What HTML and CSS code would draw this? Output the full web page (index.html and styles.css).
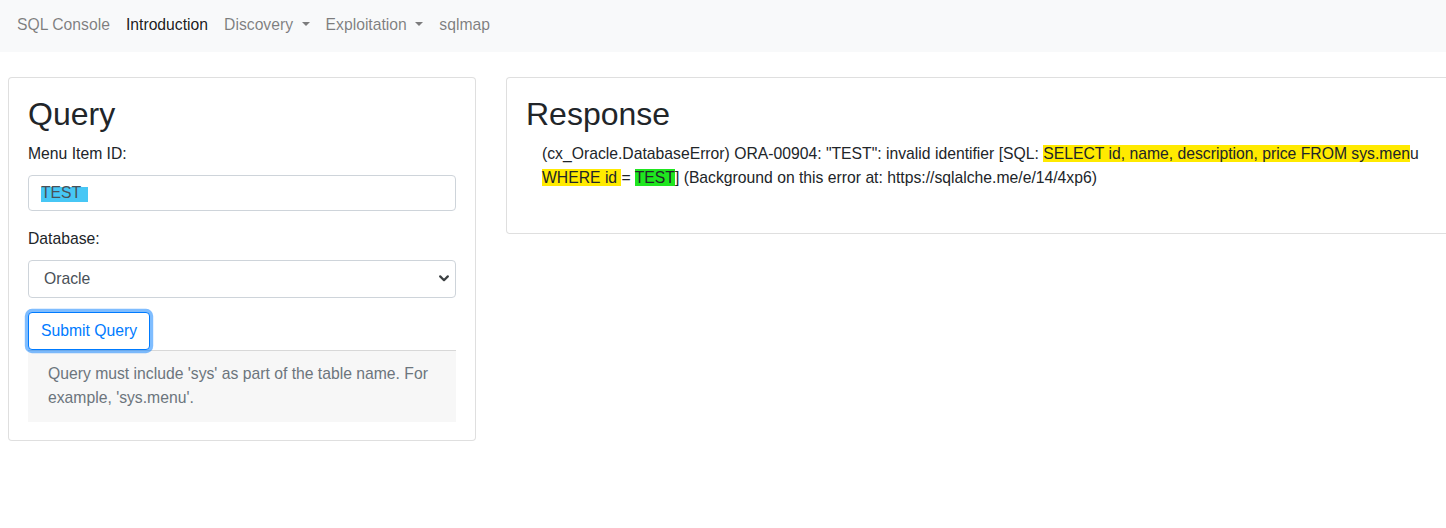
FILE: index.html
```html
<!DOCTYPE html>
<html lang="en">
<head>
<meta charset="utf-8">
<title>SQL Console</title>
<link rel="stylesheet" href="styles.css">
</head>
<body>
<nav class="navbar">
  <a class="nav-link">SQL Console</a>
  <a class="nav-link active">Introduction</a>
  <a class="nav-link dropdown-toggle">Discovery</a>
  <a class="nav-link dropdown-toggle">Exploitation</a>
  <a class="nav-link">sqlmap</a>
</nav>
<main class="row">
  <section class="card card-query">
    <div class="card-body">
      <h2 class="card-title">Query</h2>
      <label class="form-label">Menu Item ID:</label>
      <div class="form-control input-box"><span class="mark-cyan">TEST</span></div>
      <label class="form-label">Database:</label>
      <div class="form-control select-box">
        <span>Oracle</span>
        <svg class="chevron" width="10" height="7" viewBox="0 0 10 7"><polyline points="1.2,1.4 5,5.2 8.8,1.4" fill="none" stroke="#3c4043" stroke-width="2.2" stroke-linecap="round" stroke-linejoin="round"/></svg>
      </div>
      <div class="btn-row"><button class="btn-outline">Submit Query</button></div>
      <div class="card-footer">Query must include 'sys' as part of the table name. For example, 'sys.menu'.</div>
    </div>
  </section>
  <section class="card card-response">
    <div class="card-body">
      <h2 class="card-title">Response</h2>
      <p class="response-text">(cx_Oracle.DatabaseError) ORA-00904: "TEST": invalid identifier [SQL: <span class="mark-yellow">SELECT id, name, description, price FROM sys.men</span>u <span class="mark-yellow">WHERE id </span>= <span class="mark-green">TEST</span>] (Background on this error at: https://sqlalche.me/e/14/4xp6)</p>
    </div>
  </section>
</main>
</body>
</html>
```
FILE: styles.css
```css
html, body {
  overflow-x: hidden;
}
body {
  margin: 0;
  font-family: "Liberation Sans", Arial, sans-serif;
  font-size: 15.73px;
  line-height: 24px;
  color: #212529;
  background: #fff;
}
.navbar {
  display: flex;
  align-items: center;
  background: #f8f9fa;
  padding: 13px 0 15px 9px;
}
.nav-link {
  padding: 0 8px;
  color: rgba(0, 0, 0, 0.5);
  text-decoration: none;
}
.nav-link.active {
  color: rgba(0, 0, 0, 0.9);
}
.dropdown-toggle::after {
  content: "";
  display: inline-block;
  margin-left: 8.5px;
  vertical-align: 4px;
  border-top: 4.8px solid;
  border-right: 4.8px solid transparent;
  border-left: 4.8px solid transparent;
}
.row {
  display: flex;
  align-items: flex-start;
  gap: 30px;
  margin: 25px 0 0 8px;
}
.card {
  flex: none;
  border: 1px solid rgba(0, 0, 0, 0.125);
  border-radius: 4px;
  background: #fff;
  box-sizing: border-box;
}
.card-query {
  width: 468px;
}
.card-response {
  width: 966px;
}
.card-body {
  padding: 17px 19px 18px;
}
.card-response .card-body {
  padding-bottom: 19px;
}
.card-title {
  margin: 0 0 9px;
  font-size: 32px;
  line-height: 38.4px;
  font-weight: 500;
}
.form-label {
  display: block;
  margin-bottom: 8.5px;
}
.form-control {
  box-sizing: border-box;
  border: 1px solid #ced4da;
  border-radius: 4px;
  color: #495057;
  background: #fff;
}
.input-box {
  height: 36.5px;
  padding: 5px 12px;
  margin-bottom: 16px;
}
.mark-cyan {
  display: inline-block;
  padding-right: 7px;
  line-height: 18px;
  background-image: linear-gradient(#47c7f5, #47c7f5);
  background-size: 48px 16px;
  background-position: 0 3px;
  background-repeat: no-repeat;
}
.select-box {
  height: 38px;
  display: flex;
  align-items: center;
  justify-content: space-between;
  padding: 0 6px 0 15px;
  margin-bottom: 14.5px;
}
.chevron {
  display: block;
}
.btn-row {
  display: flex;
}
.btn-outline {
  font-family: inherit;
  font-size: 15.73px;
  line-height: 24px;
  height: 38px;
  padding: 6px 12px;
  color: #007bff;
  background: #fff;
  border: 1px solid #007bff;
  border-radius: 4px;
  box-shadow: 0 0 0 3.2px rgba(0, 123, 255, 0.5);
  position: relative;
  z-index: 1;
}
.card-footer {
  padding: 11px 20px 12px;
  background: rgba(0, 0, 0, 0.03);
  border-top: 1px solid rgba(0, 0, 0, 0.125);
  color: #6c757d;
}
.response-text {
  margin: 0 0 24px 16px;
}
.mark-yellow {
  background: #ffea00;
}
.mark-green {
  background: #1fe61f;
}
```
